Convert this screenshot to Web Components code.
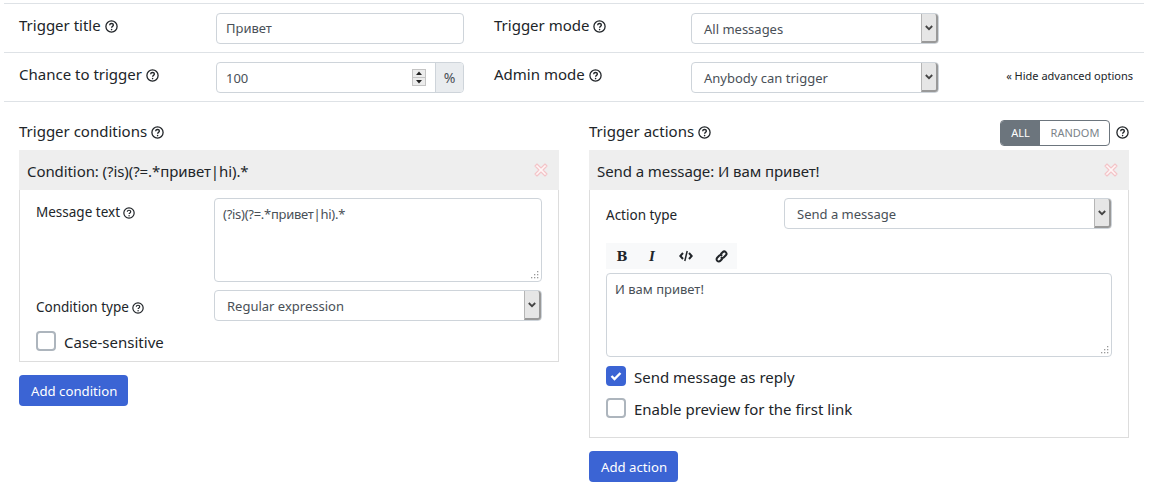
<!DOCTYPE html>
<html>
<head>
<meta charset="utf-8">
<style>
  html, body { margin: 0; padding: 0; background: #fff; }
  body { font-family: "Noto Sans", sans-serif; font-size: 15px; color: #212529; }
  .page { width: 1140px; margin-left: 4px; padding-top: 3px; }
  .columns { display: grid; grid-template-columns: 570px 570px; }
</style>
</head>
<body>
<div class="page">
  <form-row>
    <field-label help slot="l1">Trigger title</field-label>
    <text-box slot="c1">Привет</text-box>
    <field-label help slot="l2">Trigger mode</field-label>
    <select-box slot="c2">All messages</select-box>
  </form-row>
  <form-row bottom>
    <field-label help slot="l1">Chance to trigger</field-label>
    <number-box slot="c1">100</number-box>
    <field-label help slot="l2">Admin mode</field-label>
    <select-box slot="c2">Anybody can trigger</select-box>
    <span slot="extra">« Hide advanced options</span>
  </form-row>
  <div class="columns">
    <trigger-section>
      <field-label help slot="title">Trigger conditions</field-label>
      <trigger-card title="Condition: (?is)(?=.*привет|hi).*">
        <card-row>
          <field-label help slot="label" small style="margin-top:3px">Message text</field-label>
          <text-area slot="control" rows-height="84" style="letter-spacing:-.27px">(?is)(?=.*привет|hi).*</text-area>
        </card-row>
        <card-row style="margin-top:8px">
          <field-label help slot="label" small style="margin-top:6px">Condition type</field-label>
          <select-box slot="control" style="--select-width:328px">Regular expression</select-box>
        </card-row>
        <check-row style="margin-top:10px;--label-shift:1px">Case-sensitive</check-row>
      </trigger-card>
      <blue-button>Add condition</blue-button>
    </trigger-section>
    <trigger-section>
      <field-label help slot="title">Trigger actions</field-label>
      <mode-toggle slot="aside"></mode-toggle>
      <trigger-card title="Send a message: И вам привет!">
        <card-row>
          <field-label slot="label" small style="margin-top:6px">Action type</field-label>
          <select-box slot="control" style="--select-width:328px">Send a message</select-box>
        </card-row>
        <format-bar></format-bar>
        <text-area rows-height="84">И вам привет!</text-area>
        <check-row checked style="margin-top:9px;--label-shift:1px">Send message as reply</check-row>
        <check-row style="margin:12px 0 9px;--label-shift:1px">Enable preview for the first link</check-row>
      </trigger-card>
      <blue-button>Add action</blue-button>
    </trigger-section>
  </div>
</div>
<script>
const HELP_ICON = `<svg width="13" height="13" viewBox="0 0 13 13" fill="none" stroke="#212529"><circle cx="6.5" cy="6.5" r="5.6" stroke-width="1.3"/><path d="M4.6 5.2c.1-1.1.9-1.7 1.9-1.7s1.9.6 1.9 1.6c0 1.3-1.8 1.3-1.8 2.6" stroke-width="1.3"/><circle cx="6.6" cy="9.6" r=".8" fill="#212529" stroke="none"/></svg>`;

class FieldLabel extends HTMLElement {
  constructor(){
    super();
    this.attachShadow({mode: "open"});
  }
  connectedCallback(){
    this.shadowRoot.innerHTML = `
    <style>
      :host { display: block; line-height: 22px; white-space: nowrap; font-size: 15px; }
      :host([small]) { font-size: 13.5px; }
      svg { vertical-align: -1.5px; margin-left: 4px; }
      :host([small]) svg { width: 12px; height: 12px; margin-left: 3px; }
    </style>
    <slot></slot>${this.hasAttribute("help") ? HELP_ICON : ""}`;
  }
}

class FormRow extends HTMLElement {
  constructor(){
    super();
    this.attachShadow({mode: "open"});
    this.shadowRoot.innerHTML = `
    <style>
      :host {
        display: grid;
        grid-template-columns: 197px 278px 197px 278px 190px;
        height: 49px;
        box-sizing: border-box;
        border-top: 1px solid #dee2e6;
        padding-top: 9px;
      }
      :host([bottom]) { height: 50px; border-bottom: 1px solid #dee2e6; }
      .cell { padding: 0 15px; }
      .label { padding-top: 1px; }
      .extra {
        padding: 6px 11px 0 0;
        text-align: right;
        font-size: 11px;
        line-height: 16px;
        white-space: nowrap;
      }
    </style>
    <div class="cell label"><slot name="l1"></slot></div>
    <div class="cell"><slot name="c1"></slot></div>
    <div class="cell label"><slot name="l2"></slot></div>
    <div class="cell"><slot name="c2"></slot></div>
    <div class="extra"><slot name="extra"></slot></div>`;
  }
}

class TextBox extends HTMLElement {
  constructor(){
    super();
    this.attachShadow({mode: "open"});
    this.shadowRoot.innerHTML = `
    <style>
      :host {
        display: block;
        height: 31px;
        box-sizing: border-box;
        border: 1px solid #ced4da;
        border-radius: 4px;
        padding: 0 12px 0 9px;
        line-height: 29px;
        font-size: 13px;
        color: #495057;
      }
    </style>
    <slot></slot>`;
  }
}

class NumberBox extends HTMLElement {
  constructor(){
    super();
    this.attachShadow({mode: "open"});
    this.shadowRoot.innerHTML = `
    <style>
      :host {
        display: flex;
        height: 31px;
        box-sizing: border-box;
        border: 1px solid #ced4da;
        border-radius: 4px;
        font-size: 13px;
        color: #495057;
        line-height: 29px;
      }
      .value { flex: 1; padding: 1px 0 0 9px; display: flex; justify-content: space-between; align-items: center; }
      .spin { display: flex; flex-direction: column; width: 14px; height: 17px; margin: -1px 9px 0 0; border: 1px solid #c4c4c4; box-sizing: border-box; background: #ececec; }
      .spin svg { flex: 1; display: block; width: 100%; }
      .spin svg + svg { border-top: 1px solid #c4c4c4; }
      .unit { width: 28px; box-sizing: border-box; background: #e9ecef; border-left: 1px solid #ced4da; text-align: center; border-radius: 0 3px 3px 0; font-size: 14px; }
    </style>
    <div class="value">
      <slot></slot>
      <span class="spin">
        <svg viewBox="0 0 12 7"><path d="M6 1.5 9 5H3z" fill="#222"/></svg>
        <svg viewBox="0 0 12 7"><path d="M6 5.5 9 2H3z" fill="#222"/></svg>
      </span>
    </div>
    <div class="unit">%</div>`;
  }
}

class SelectBox extends HTMLElement {
  constructor(){
    super();
    this.attachShadow({mode: "open"});
    this.shadowRoot.innerHTML = `
    <style>
      :host {
        display: flex;
        width: var(--select-width, 248px);
        height: 31px;
        box-sizing: border-box;
        border: 1px solid #ced4da;
        border-radius: 4px;
        font-size: 13px;
        color: #495057;
        line-height: 29px;
      }
      .value { flex: 1; padding: 1px 0 0 12px; white-space: nowrap; }
      .arrow {
        width: 17px;
        box-sizing: border-box;
        background: #e6e6e6;
        border: 1px solid #b5b5b5;
        border-right-color: #999;
        border-bottom-color: #999;
        border-width: 0 2px 2px 1px;
        border-radius: 0 3px 3px 0;
        display: flex;
        align-items: center;
        justify-content: center;
      }
    </style>
    <div class="value"><slot></slot></div>
    <div class="arrow"><svg width="8" height="6" viewBox="0 0 8 6"><path d="M.8 1 4 4.2 7.2 1" fill="none" stroke="#444" stroke-width="1.8"/></svg></div>`;
  }
}

class TextArea extends HTMLElement {
  constructor(){
    super();
    this.attachShadow({mode: "open"});
  }
  connectedCallback(){
    this.shadowRoot.innerHTML = `
    <style>
      :host {
        display: block;
        position: relative;
        height: ${this.getAttribute("rows-height")}px;
        box-sizing: border-box;
        border: 1px solid #ced4da;
        border-radius: 4px;
        padding: 6px 8px;
        line-height: 18px;
        font-size: 13px;
        color: #495057;
      }
      svg { position: absolute; right: 2px; bottom: 2px; }
    </style>
    <slot></slot>
    <svg width="9" height="9" viewBox="0 0 9 9" fill="#999"><rect x="7" y="1" width="1.3" height="1.3"/><rect x="4" y="4" width="1.3" height="1.3"/><rect x="7" y="4" width="1.3" height="1.3"/><rect x="1" y="7" width="1.3" height="1.3"/><rect x="4" y="7" width="1.3" height="1.3"/><rect x="7" y="7" width="1.3" height="1.3"/></svg>`;
  }
}

class TriggerSection extends HTMLElement {
  constructor(){
    super();
    this.attachShadow({mode: "open"});
    this.shadowRoot.innerHTML = `
    <style>
      :host { display: block; padding: 0 15px; }
      .head { height: 48px; display: flex; justify-content: space-between; box-sizing: border-box; padding-top: 18px; }
    </style>
    <div class="head"><slot name="title"></slot><slot name="aside"></slot></div>
    <slot></slot>`;
  }
}

class TriggerCard extends HTMLElement {
  constructor(){
    super();
    this.attachShadow({mode: "open"});
  }
  connectedCallback(){
    this.shadowRoot.innerHTML = `
    <style>
      :host { display: block; margin-bottom: 13px; }
      .head {
        height: 40px;
        box-sizing: border-box;
        padding: 1px 11px 0 8px;
        background: #eeeeee;
        display: flex;
        align-items: center;
        justify-content: space-between;
        font-size: 15px;
        letter-spacing: -.08px;
      }
      svg { margin-top: -1px; }
      .body { border: 1px solid #dddddd; border-top: 0; padding: 8px 16px 10px; }
    </style>
    <div class="head">
      <span>${this.getAttribute("title")}</span>
      <svg width="14" height="14" viewBox="0 0 14 14"><path d="M3 1 7 5l4-4 2 2-4 4 4 4-2 2-4-4-4 4-2-2 4-4-4-4z" fill="#fff6f6" stroke="#f3c4c8" stroke-width="1.1" stroke-linejoin="round"/></svg>
    </div>
    <div class="body"><slot></slot></div>`;
  }
}

class CardRow extends HTMLElement {
  constructor(){
    super();
    this.attachShadow({mode: "open"});
    this.shadowRoot.innerHTML = `
    <style>
      :host { display: grid; grid-template-columns: 178px 328px; }
    </style>
    <div><slot name="label"></slot></div>
    <div><slot name="control"></slot></div>`;
  }
}

class CheckRow extends HTMLElement {
  constructor(){
    super();
    this.attachShadow({mode: "open"});
  }
  connectedCallback(){
    const checked = this.hasAttribute("checked");
    this.shadowRoot.innerHTML = `
    <style>
      :host { display: flex; align-items: center; gap: 8px; height: 20px; font-size: 15px; white-space: nowrap; }
      .box {
        width: 20px; height: 20px; box-sizing: border-box; border-radius: 4px;
        border: 2px solid #adb5bd; background: #fff;
        display: flex; align-items: center; justify-content: center;
      }
      :host([checked]) .box { background: #3b64d4; border-color: #3b64d4; }
      .text { padding-top: var(--label-shift, 0); }
    </style>
    <span class="box">${checked ? `<svg width="12" height="10" viewBox="0 0 12 10"><path d="M1.5 5 4.5 8 10.5 2" fill="none" stroke="#fff" stroke-width="2.4"/></svg>` : ""}</span>
    <span class="text"><slot></slot></span>`;
  }
}

class BlueButton extends HTMLElement {
  constructor(){
    super();
    this.attachShadow({mode: "open"});
    this.shadowRoot.innerHTML = `
    <style>
      :host {
        display: inline-block;
        height: 31px;
        padding: 0 11px 0 12px;
        background: #3b64d4;
        border-radius: 4px;
        color: #fff;
        font-size: 13.2px;
        line-height: 32px;
      }
    </style>
    <slot></slot>`;
  }
}

class ModeToggle extends HTMLElement {
  constructor(){
    super();
    this.attachShadow({mode: "open"});
    this.shadowRoot.innerHTML = `
    <style>
      :host { display: flex; align-items: flex-start; gap: 6px; }
      .group { display: flex; height: 26px; box-sizing: border-box; border: 1px solid #6c757d; border-radius: 4px; font-size: 11px; line-height: 24px; overflow: hidden; }
      .on { width: 39px; background: #6c757d; color: #fff; text-align: center; }
      .off { width: 69px; padding-left: 1px; box-sizing: border-box; color: #7b838a; text-align: center; }
      svg { margin-top: 6px; }
    </style>
    <div class="group"><div class="on">ALL</div><div class="off">RANDOM</div></div>
    ${HELP_ICON}`;
  }
}

class FormatBar extends HTMLElement {
  constructor(){
    super();
    this.attachShadow({mode: "open"});
    this.shadowRoot.innerHTML = `
    <style>
      :host {
        display: grid;
        grid-template-columns: 32px 28px 40px 31px;
        width: 131px;
        height: 26px;
        margin: 14px 0 4px;
        background: #f8f9fa;
        color: #212529;
      }
      span { display: flex; align-items: center; justify-content: center; }
      .b { font: 900 13px "DejaVu Serif", serif; }
      .i { font: italic bold 15px "Liberation Serif", serif; }
    </style>
    <span class="b">B</span>
    <span class="i">I</span>
    <span><svg width="14" height="12" viewBox="0 0 14 12" fill="none" stroke="#212529" stroke-width="2"><path d="M4 3 1.3 6 4 9M10 3l2.7 3L10 9"/><path d="M8.2 1 5.8 11" stroke-width="1.5"/></svg></span>
    <span><svg width="13" height="13" viewBox="0 0 13 13" fill="none" stroke="#212529" stroke-width="2"><path d="M5.6 4.2 7.6 2.2a2.2 2.2 0 0 1 3.2 3.1L8.9 7.2a2.2 2.2 0 0 1-3.1 0"/><path d="M7.4 8.8 5.4 10.8a2.2 2.2 0 0 1-3.2-3.1L4.1 5.8a2.2 2.2 0 0 1 3.1 0"/></svg></span>`;
  }
}

customElements.define('field-label', FieldLabel);
customElements.define('form-row', FormRow);
customElements.define('text-box', TextBox);
customElements.define('number-box', NumberBox);
customElements.define('select-box', SelectBox);
customElements.define('text-area', TextArea);
customElements.define('trigger-section', TriggerSection);
customElements.define('trigger-card', TriggerCard);
customElements.define('card-row', CardRow);
customElements.define('check-row', CheckRow);
customElements.define('blue-button', BlueButton);
customElements.define('mode-toggle', ModeToggle);
customElements.define('format-bar', FormatBar);
</script>
</body>
</html>
